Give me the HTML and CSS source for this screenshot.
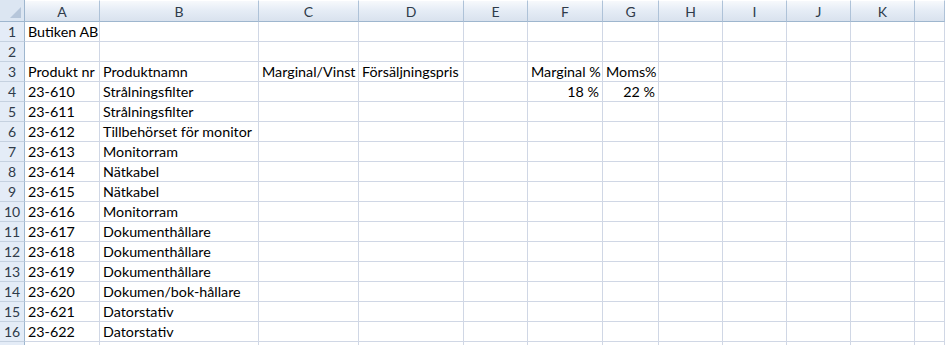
FILE: index.html
```html
<!DOCTYPE html>
<html lang="sv">
<head>
<meta charset="utf-8">
<title>Butiken AB</title>
<link rel="stylesheet" href="styles.css">
</head>
<body>
<div class="sheet">
  <div class="corner"><svg class="tri" width="11" height="11" viewBox="0 0 11 11"><polygon points="11,0 11,11 0,11" fill="#b6c6da"/></svg></div>
  <div class="ch">A</div><div class="ch">B</div><div class="ch">C</div><div class="ch">D</div><div class="ch">E</div><div class="ch">F</div><div class="ch">G</div><div class="ch">H</div><div class="ch">I</div><div class="ch">J</div><div class="ch">K</div><div class="ch"></div>

  <div class="rh">1</div><div class="c">Butiken AB</div><div class="c"></div><div class="c"></div><div class="c"></div><div class="c"></div><div class="c"></div><div class="c"></div><div class="c"></div><div class="c"></div><div class="c"></div><div class="c"></div><div class="c"></div>
  <div class="rh">2</div><div class="c"></div><div class="c"></div><div class="c"></div><div class="c"></div><div class="c"></div><div class="c"></div><div class="c"></div><div class="c"></div><div class="c"></div><div class="c"></div><div class="c"></div><div class="c"></div>
  <div class="rh">3</div><div class="c">Produkt nr</div><div class="c">Produktnamn</div><div class="c">Marginal/Vinst</div><div class="c">Försäljningspris</div><div class="c"></div><div class="c">Marginal %</div><div class="c">Moms%</div><div class="c"></div><div class="c"></div><div class="c"></div><div class="c"></div><div class="c"></div>
  <div class="rh">4</div><div class="c">23-610</div><div class="c">Strålningsfilter</div><div class="c"></div><div class="c"></div><div class="c"></div><div class="c num">18 %</div><div class="c num">22 %</div><div class="c"></div><div class="c"></div><div class="c"></div><div class="c"></div><div class="c"></div>
  <div class="rh">5</div><div class="c">23-611</div><div class="c">Strålningsfilter</div><div class="c"></div><div class="c"></div><div class="c"></div><div class="c"></div><div class="c"></div><div class="c"></div><div class="c"></div><div class="c"></div><div class="c"></div><div class="c"></div>
  <div class="rh">6</div><div class="c">23-612</div><div class="c">Tillbehörset för monitor</div><div class="c"></div><div class="c"></div><div class="c"></div><div class="c"></div><div class="c"></div><div class="c"></div><div class="c"></div><div class="c"></div><div class="c"></div><div class="c"></div>
  <div class="rh">7</div><div class="c">23-613</div><div class="c">Monitorram</div><div class="c"></div><div class="c"></div><div class="c"></div><div class="c"></div><div class="c"></div><div class="c"></div><div class="c"></div><div class="c"></div><div class="c"></div><div class="c"></div>
  <div class="rh">8</div><div class="c">23-614</div><div class="c">Nätkabel</div><div class="c"></div><div class="c"></div><div class="c"></div><div class="c"></div><div class="c"></div><div class="c"></div><div class="c"></div><div class="c"></div><div class="c"></div><div class="c"></div>
  <div class="rh">9</div><div class="c">23-615</div><div class="c">Nätkabel</div><div class="c"></div><div class="c"></div><div class="c"></div><div class="c"></div><div class="c"></div><div class="c"></div><div class="c"></div><div class="c"></div><div class="c"></div><div class="c"></div>
  <div class="rh">10</div><div class="c">23-616</div><div class="c">Monitorram</div><div class="c"></div><div class="c"></div><div class="c"></div><div class="c"></div><div class="c"></div><div class="c"></div><div class="c"></div><div class="c"></div><div class="c"></div><div class="c"></div>
  <div class="rh">11</div><div class="c">23-617</div><div class="c">Dokumenthållare</div><div class="c"></div><div class="c"></div><div class="c"></div><div class="c"></div><div class="c"></div><div class="c"></div><div class="c"></div><div class="c"></div><div class="c"></div><div class="c"></div>
  <div class="rh">12</div><div class="c">23-618</div><div class="c">Dokumenthållare</div><div class="c"></div><div class="c"></div><div class="c"></div><div class="c"></div><div class="c"></div><div class="c"></div><div class="c"></div><div class="c"></div><div class="c"></div><div class="c"></div>
  <div class="rh">13</div><div class="c">23-619</div><div class="c">Dokumenthållare</div><div class="c"></div><div class="c"></div><div class="c"></div><div class="c"></div><div class="c"></div><div class="c"></div><div class="c"></div><div class="c"></div><div class="c"></div><div class="c"></div>
  <div class="rh">14</div><div class="c">23-620</div><div class="c">Dokumen/bok-hållare</div><div class="c"></div><div class="c"></div><div class="c"></div><div class="c"></div><div class="c"></div><div class="c"></div><div class="c"></div><div class="c"></div><div class="c"></div><div class="c"></div>
  <div class="rh">15</div><div class="c">23-621</div><div class="c">Datorstativ</div><div class="c"></div><div class="c"></div><div class="c"></div><div class="c"></div><div class="c"></div><div class="c"></div><div class="c"></div><div class="c"></div><div class="c"></div><div class="c"></div>
  <div class="rh">16</div><div class="c">23-622</div><div class="c">Datorstativ</div><div class="c"></div><div class="c"></div><div class="c"></div><div class="c"></div><div class="c"></div><div class="c"></div><div class="c"></div><div class="c"></div><div class="c"></div><div class="c"></div>
  <div class="rh"></div><div class="c"></div><div class="c"></div><div class="c"></div><div class="c"></div><div class="c"></div><div class="c"></div><div class="c"></div><div class="c"></div><div class="c"></div><div class="c"></div><div class="c"></div><div class="c"></div>
</div>
</body>
</html>
```

FILE: styles.css
```css
html, body {
  margin: 0;
  padding: 0;
  background: #ffffff;
  overflow: hidden;
}

.sheet {
  display: grid;
  grid-template-columns: 25px 75px 159px 100px 105px 64px 75px 56px 64px 64px 64px 64px 1fr;
  grid-template-rows: 22px;
  grid-auto-rows: 20px;
  font-family: Lato, "Liberation Sans", sans-serif;
  font-size: 14.3px;
  color: #000000;
}

.sheet > div {
  box-sizing: border-box;
  white-space: nowrap;
  overflow: hidden;
}

.corner {
  background: #dce6f2;
  border-right: 1px solid #9eb6ce;
  border-bottom: 1px solid #9eb6ce;
  display: flex;
  align-items: flex-end;
  justify-content: flex-end;
  padding: 0 3px 3px 0;
}

.tri {
  display: block;
}

.ch {
  background: linear-gradient(#f7f9fc 0%, #e6edf6 45%, #d9e2ee 100%);
  border-right: 1px solid #aec2d8;
  border-bottom: 1px solid #9eb6ce;
  border-top: 1px solid #ffffff;
  display: flex;
  align-items: center;
  justify-content: center;
  color: #2f3b4a;
  font-size: 14px;
}

.rh {
  background: #e4ecf7;
  border-right: 1px solid #9eb6ce;
  border-bottom: 1px solid #c5d1e0;
  display: flex;
  align-items: center;
  justify-content: center;
  color: #2f3b4a;
  font-size: 14px;
}

.c {
  border-right: 1px solid #d0d7e5;
  border-bottom: 1px solid #d0d7e5;
  padding: 1px 3px 0;
  display: flex;
  align-items: center;
  line-height: 1;
}

.num {
  justify-content: flex-end;
}
```
